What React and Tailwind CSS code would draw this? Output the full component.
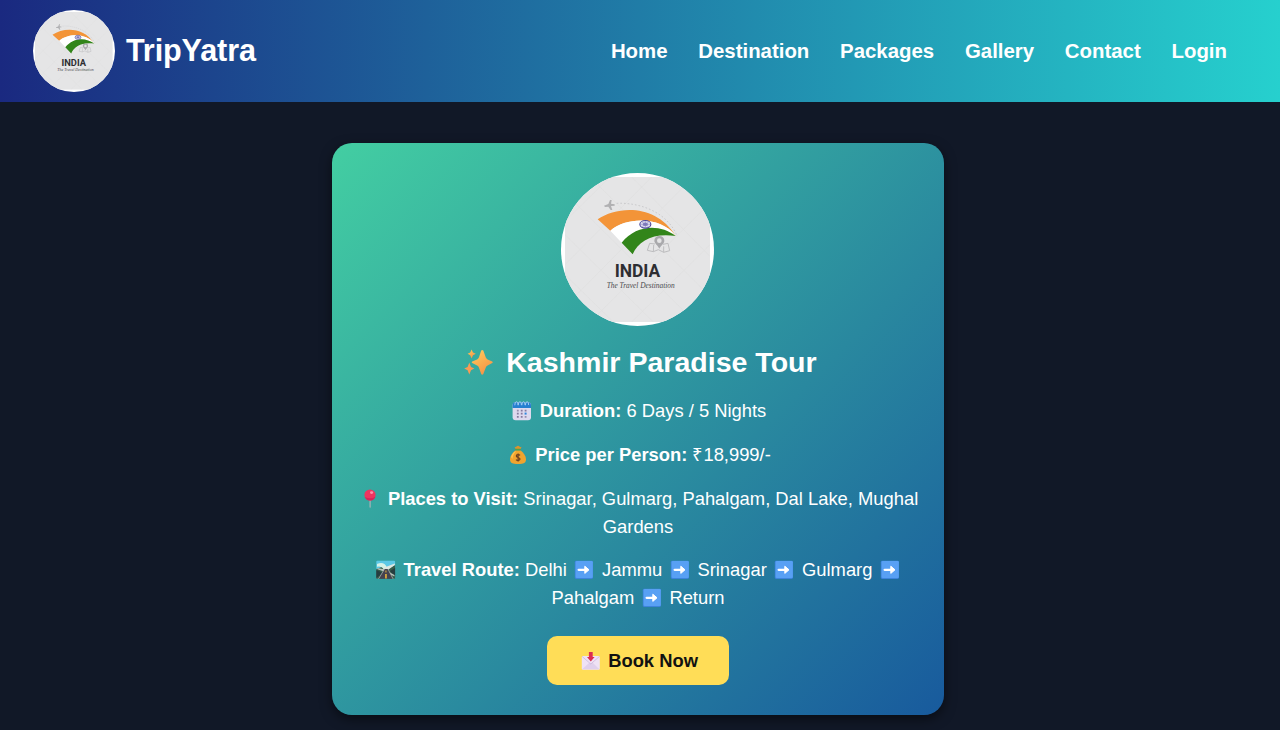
const NAV_LINKS = ["Home", "Destination", "Packages", "Gallery", "Contact", "Login"];

function Logo({ className }) {
  return (
    <svg viewBox="45 37 435 435" className={className} aria-hidden="true">
      <rect x="45" y="37" width="435" height="435" fill="#e5e5e6" />
      <g stroke="#dfdfe0" strokeWidth="2" fill="none">
        <path d="M45 170 L180 37 M45 300 L305 37 M45 425 L430 37 M120 472 L480 115 M245 472 L480 240 M370 472 L480 365" />
        <path d="M45 330 L190 472 M45 210 L310 472 M45 85 L435 472 M120 37 L480 395 M245 37 L480 275 M370 37 L480 150" />
      </g>
      <path d="M200 116 C270 113 350 142 380 211" fill="none" stroke="#bcbcc0" strokeWidth="2" strokeDasharray="5 6" />
      <path d="M162 123 L175 118 L180 106 L185 106 L183 117 L194 119 L194 123 L183 124 L187 136 L182 136 L175 126 L165 127 Z" fill="#b0b0b2" />
      <path d="M143 164 C205 122 320 119 377 214 C335 155 230 155 181 198 Z" fill="#f39438" />
      <path d="M181 198 C230 155 335 155 377 214 C320 176 260 185 215 234 Z" fill="#fff" />
      <path d="M215 234 C260 179 330 178 377 214 C312 204 265 227 248 269 Z" fill="#32851a" />
      <ellipse cx="286" cy="179" rx="16.5" ry="11.5" fill="#dedcf0" stroke="#4f4a9c" strokeWidth="3.5" />
      <ellipse cx="286" cy="179" rx="8" ry="5.5" fill="#8985c3" />
      <path d="M271 179 H301 M286 169 V189 M276 172 L296 186 M296 172 L276 186" stroke="#7772b5" strokeWidth="1.3" />
      <path d="M315 238 L299 236 L292 257 L310 261 L325 255 L341 263 L359 258 L354 236 L339 239 M311 241 L310 261 M341 245 V263" fill="none" stroke="#bdbdbf" strokeWidth="3" />
      <path fillRule="evenodd" d="M328 252 C323 241 313 236 313 228 A15 14 0 0 1 343 228 C343 237 333 241 328 252 Z M328 221 A7 7 0 1 0 328 235 A7 7 0 1 0 328 221 Z" fill="#a9a9ac" />
      <text x="194" y="338" textLength="137" lengthAdjust="spacingAndGlyphs" fontFamily="Roboto, sans-serif" fontWeight="700" fontSize="53" fill="#2d2e32">
        INDIA
      </text>
      <text x="170" y="370" textLength="204" lengthAdjust="spacingAndGlyphs" fontFamily="'Liberation Serif', serif" fontStyle="italic" fontSize="25" fill="#4a4a4e">
        The Travel Destination
      </text>
    </svg>
  );
}

function Emoji({ children, viewBox = "0 0 20 20" }) {
  return (
    <span className="inline-flex h-5 w-[25px] justify-center align-[-4px]">
      <svg viewBox={viewBox} className="h-5 w-5" aria-hidden="true">
        {children}
      </svg>
    </span>
  );
}

function Sparkles() {
  return (
    <span className="inline-flex h-7 w-[39px] justify-center align-[-5px]">
      <svg viewBox="0 0 28 28" className="h-7 w-7 overflow-visible" aria-hidden="true">
        <defs>
          <linearGradient id="spark" x1="0" y1="0" x2="0.6" y2="1">
            <stop offset="0" stopColor="#ffd05f" />
            <stop offset="1" stopColor="#f79345" />
          </linearGradient>
        </defs>
        <g fill="url(#spark)">
          <path d="M16.2 1.6 Q17.2 0.2 18.3 1.6 L20.8 8.6 Q21.3 9.9 22.6 10.4 L27.2 12.4 Q28.6 13.2 27.2 14.1 L22.6 16.4 Q21.3 17 20.8 18.4 L18.3 25 Q17.2 26.5 16.2 25 L13.9 18.4 Q13.4 17 12.1 16.4 L7.2 14.1 Q6 13.2 7.2 12.4 L12.1 10.4 Q13.4 9.9 13.9 8.6 Z" />
          <path d="M6.6 0.4 L8 3.6 L10.8 4.8 L8 6.2 L6.6 9.4 L5.2 6.2 L2.6 4.8 L5.2 3.6 Z" />
          <path d="M4.3 13.4 L6 18 L9.4 19.6 L6 21.3 L4.3 25.6 L2.6 21.3 L-0.8 19.6 L2.6 18 Z" fill="#f99b55" />
        </g>
      </svg>
    </span>
  );
}

function Calendar() {
  return (
    <Emoji>
      <rect x="0.6" y="1.3" width="18.4" height="18" rx="3" fill="#ddd9ee" />
      <path d="M0.6 7 V4.3 Q0.6 1.3 3.3 1.3 H16.3 Q19 1.3 19 4.3 V7 Z" fill="#267fd0" />
      <path d="M2.8 4.3 q0 -3.6 1.7 -3.6 t1.5 3.3 M6.2 4.3 q0 -3.6 1.7 -3.6 t1.5 3.3 M9.8 4.3 q0 -3.6 1.7 -3.6 t1.5 3.3 M13.4 4.3 q0 -3.6 1.7 -3.6 t1.5 3.3" stroke="#a9d3f5" strokeWidth="0.9" fill="none" />
      <g fill="#857b9e">
        <path d="M8.8 8.8 h1.8 v1.8 h-1.8z M12.7 8.8 h1.8 v1.8 h-1.8z M4.9 11.8 h1.8 v1.8 h-1.8z M8.8 11.8 h1.8 v1.8 h-1.8z M4.9 14.9 h1.8 v1.8 h-1.8z M8.8 14.9 h1.8 v1.8 h-1.8z" />
        <path d="M4.9 8.8 h1.8 v1.8 h-1.8z M12.7 14.9 h1.8 v1.8 h-1.8z" fillOpacity="0.8" />
      </g>
      <path d="M12.6 11.6 h2 v2 h-2z" fill="#2f86dd" />
    </Emoji>
  );
}

function MoneyBag() {
  return (
    <Emoji>
      <path d="M6.6 1.8 Q8 2.5 8.4 1.4 Q10 0.3 11.6 1.4 Q12 2.5 13.6 1.8 L12.2 5 H7.9 Z" fill="#d9942e" />
      <path d="M7.5 5.2 H12.5 C15.5 7.5 18 11 18 14.2 C18 18 15.6 19 10 19 C4.4 19 2 18 2 14.2 C2 11 4.5 7.5 7.5 5.2 Z" fill="#f1a42e" />
      <path d="M3 12 C4 8.5 6 6.5 8 6 C7 8 5 9 4.5 14 Z" fill="#ffc24f" />
      <rect x="7" y="3.8" width="6" height="1.7" rx="0.8" fill="#55a04c" />
      <path d="M12 10.4 C11 9.2 8.3 9.4 8.3 11 C8.3 12.8 12 12.2 12 14.1 C12 15.7 9 15.8 8 14.7 M10.1 8.6 V16.5" stroke="#6b3f20" strokeWidth="1.2" fill="none" />
    </Emoji>
  );
}

function Pushpin() {
  return (
    <Emoji>
      <path d="M9.5 10 H10.7 V18 L10.1 19.2 L9.5 18 Z" fill="#a8b5b8" />
      <circle cx="10" cy="6" r="5.6" fill="#ee3560" />
      <path d="M4.8 8 A5.6 5.6 0 0 0 15.4 7.4 Q11 11 4.8 8 Z" fill="#d4285b" />
      <ellipse cx="11.6" cy="3.6" rx="1.6" ry="1.3" fill="#ff91aa" />
    </Emoji>
  );
}

function Motorway() {
  return (
    <Emoji>
      <rect x="0.3" y="0.8" width="18.8" height="18" rx="1" fill="#5cc8e6" />
      <path d="M0.3 9 L6 7 L12 9 L19.1 5 V18.8 H0.3 Z" fill="#375c49" />
      <path d="M0.3 10 L7 13 L0.3 18 Z M19.1 8 L14 11 L19.1 17 Z" fill="#263d40" />
      <path d="M1 4 Q8 1 11 7.5 L8 9.5 Q5.5 5.6 1 6.8 Z" fill="#d5f1e7" />
      <path d="M7 8 L18.8 3.4 V5 L11.8 10 Z" fill="#dfe7e0" />
      <path d="M1.4 8 L8 9.3 L18.5 15 V16.4 L8 11.5 L1.4 9.3 Z" fill="#b9c5be" />
      <path d="M8.5 9 H12 L17 18.8 H2.6 Z" fill="#45424e" />
      <path d="M8.5 9 L2.6 18.8 M12 9 L17 18.8" stroke="#ccd0ca" strokeWidth="0.6" />
      <path d="M9.5 10.5 h0.9 v2 h-0.9z M9.2 14 h1.5 v4.5 h-1.5z" fill="#f3b93a" />
    </Emoji>
  );
}

function ArrowRight() {
  return (
    <Emoji>
      <rect x="0.8" y="0.8" width="18.2" height="18.2" rx="1.4" fill="#3d83dc" />
      <rect x="1.6" y="1.1" width="17.2" height="16.8" rx="1.2" fill="#58a0f4" />
      <path d="M4.6 9.8 H12" stroke="#fff" strokeWidth="2.2" strokeLinecap="round" />
      <path d="M10.8 6.2 L15 9.8 L10.8 13.4 Z" fill="#fff" stroke="#fff" strokeWidth="1" strokeLinejoin="round" />
    </Emoji>
  );
}

function EnvelopeArrow() {
  return (
    <Emoji>
      <rect x="0.8" y="5" width="18" height="13.8" rx="1.4" fill="#efe2f5" />
      <path d="M1.2 18.3 L8 12 H12 L18.4 18.3 Z" fill="#e0d0ec" />
      <path d="M1.2 5.5 L9.8 13 L18.4 5.5" stroke="#cbb9da" strokeWidth="0.8" fill="none" />
      <path d="M7.9 1 H11.7 V6 H13.6 L9.8 10.6 L6 6 H7.9 Z" fill="#dc2e50" />
    </Emoji>
  );
}

function Header() {
  return (
    <header className="flex h-[102px] items-center justify-between bg-linear-[90deg,#1a2980,#26d0ce] pr-[53px] pl-[33.4px] text-white">
      <div className="flex items-center gap-[11px]">
        <div className="size-[81.6px] overflow-hidden rounded-full bg-white p-[2px]">
          <Logo className="size-full" />
        </div>
        <span className="pb-px text-[30.6px] leading-none font-bold tracking-[-0.12px]">TripYatra</span>
      </div>
      <nav className="flex gap-[30.75px] text-[20.4px] leading-none font-bold">
        {NAV_LINKS.map((label) => (
          <a key={label} href="#">
            {label}
          </a>
        ))}
      </nav>
    </header>
  );
}

export default function App() {
  return (
    <div className="h-[730px] overflow-hidden bg-[#111827] font-['Liberation_Sans',Arial,sans-serif]">
      <Header />
      <main className="flex justify-center pt-[41px] pr-1">
        <article className="flex h-[572px] w-[612px] flex-col items-center rounded-[20px] bg-linear-[135deg,#43cea2,#185a9d] pt-[30.4px] text-center text-[18.36px] leading-[27.54px] text-white shadow-[0_4px_12px_rgba(0,0,0,0.5)]">
          <div className="mr-px size-[153px] shrink-0 overflow-hidden rounded-full bg-white p-1">
            <Logo className="size-full" />
          </div>
          <h1 className="mt-[19.2px] h-[33px] text-[28.56px] leading-[33px] font-bold whitespace-nowrap">
            <Sparkles /> Kashmir Paradise Tour
          </h1>
          <div className="mt-[18.8px] flex w-[561px] flex-col gap-[16.3px]">
            <p>
              <Calendar /> <strong>Duration:</strong> 6 Days / 5 Nights
            </p>
            <p>
              <MoneyBag /> <strong>Price per Person:</strong> ₹18,999/-
            </p>
            <p>
              <Pushpin /> <strong>Places to Visit:</strong> Srinagar, Gulmarg, Pahalgam, Dal Lake, Mughal
              <br />
              Gardens
            </p>
            <p>
              <Motorway /> <strong>Travel Route:</strong> Delhi <ArrowRight /> Jammu <ArrowRight /> Srinagar{" "}
              <ArrowRight /> Gulmarg <ArrowRight />
              <br />
              Pahalgam <ArrowRight /> Return
            </p>
          </div>
          <button className="mt-[24.4px] h-[49px] w-[182px] shrink-0 rounded-[10px] bg-[#ffdd57] pt-px font-bold text-[#111]">
            <EnvelopeArrow /> Book Now
          </button>
        </article>
      </main>
    </div>
  );
}
